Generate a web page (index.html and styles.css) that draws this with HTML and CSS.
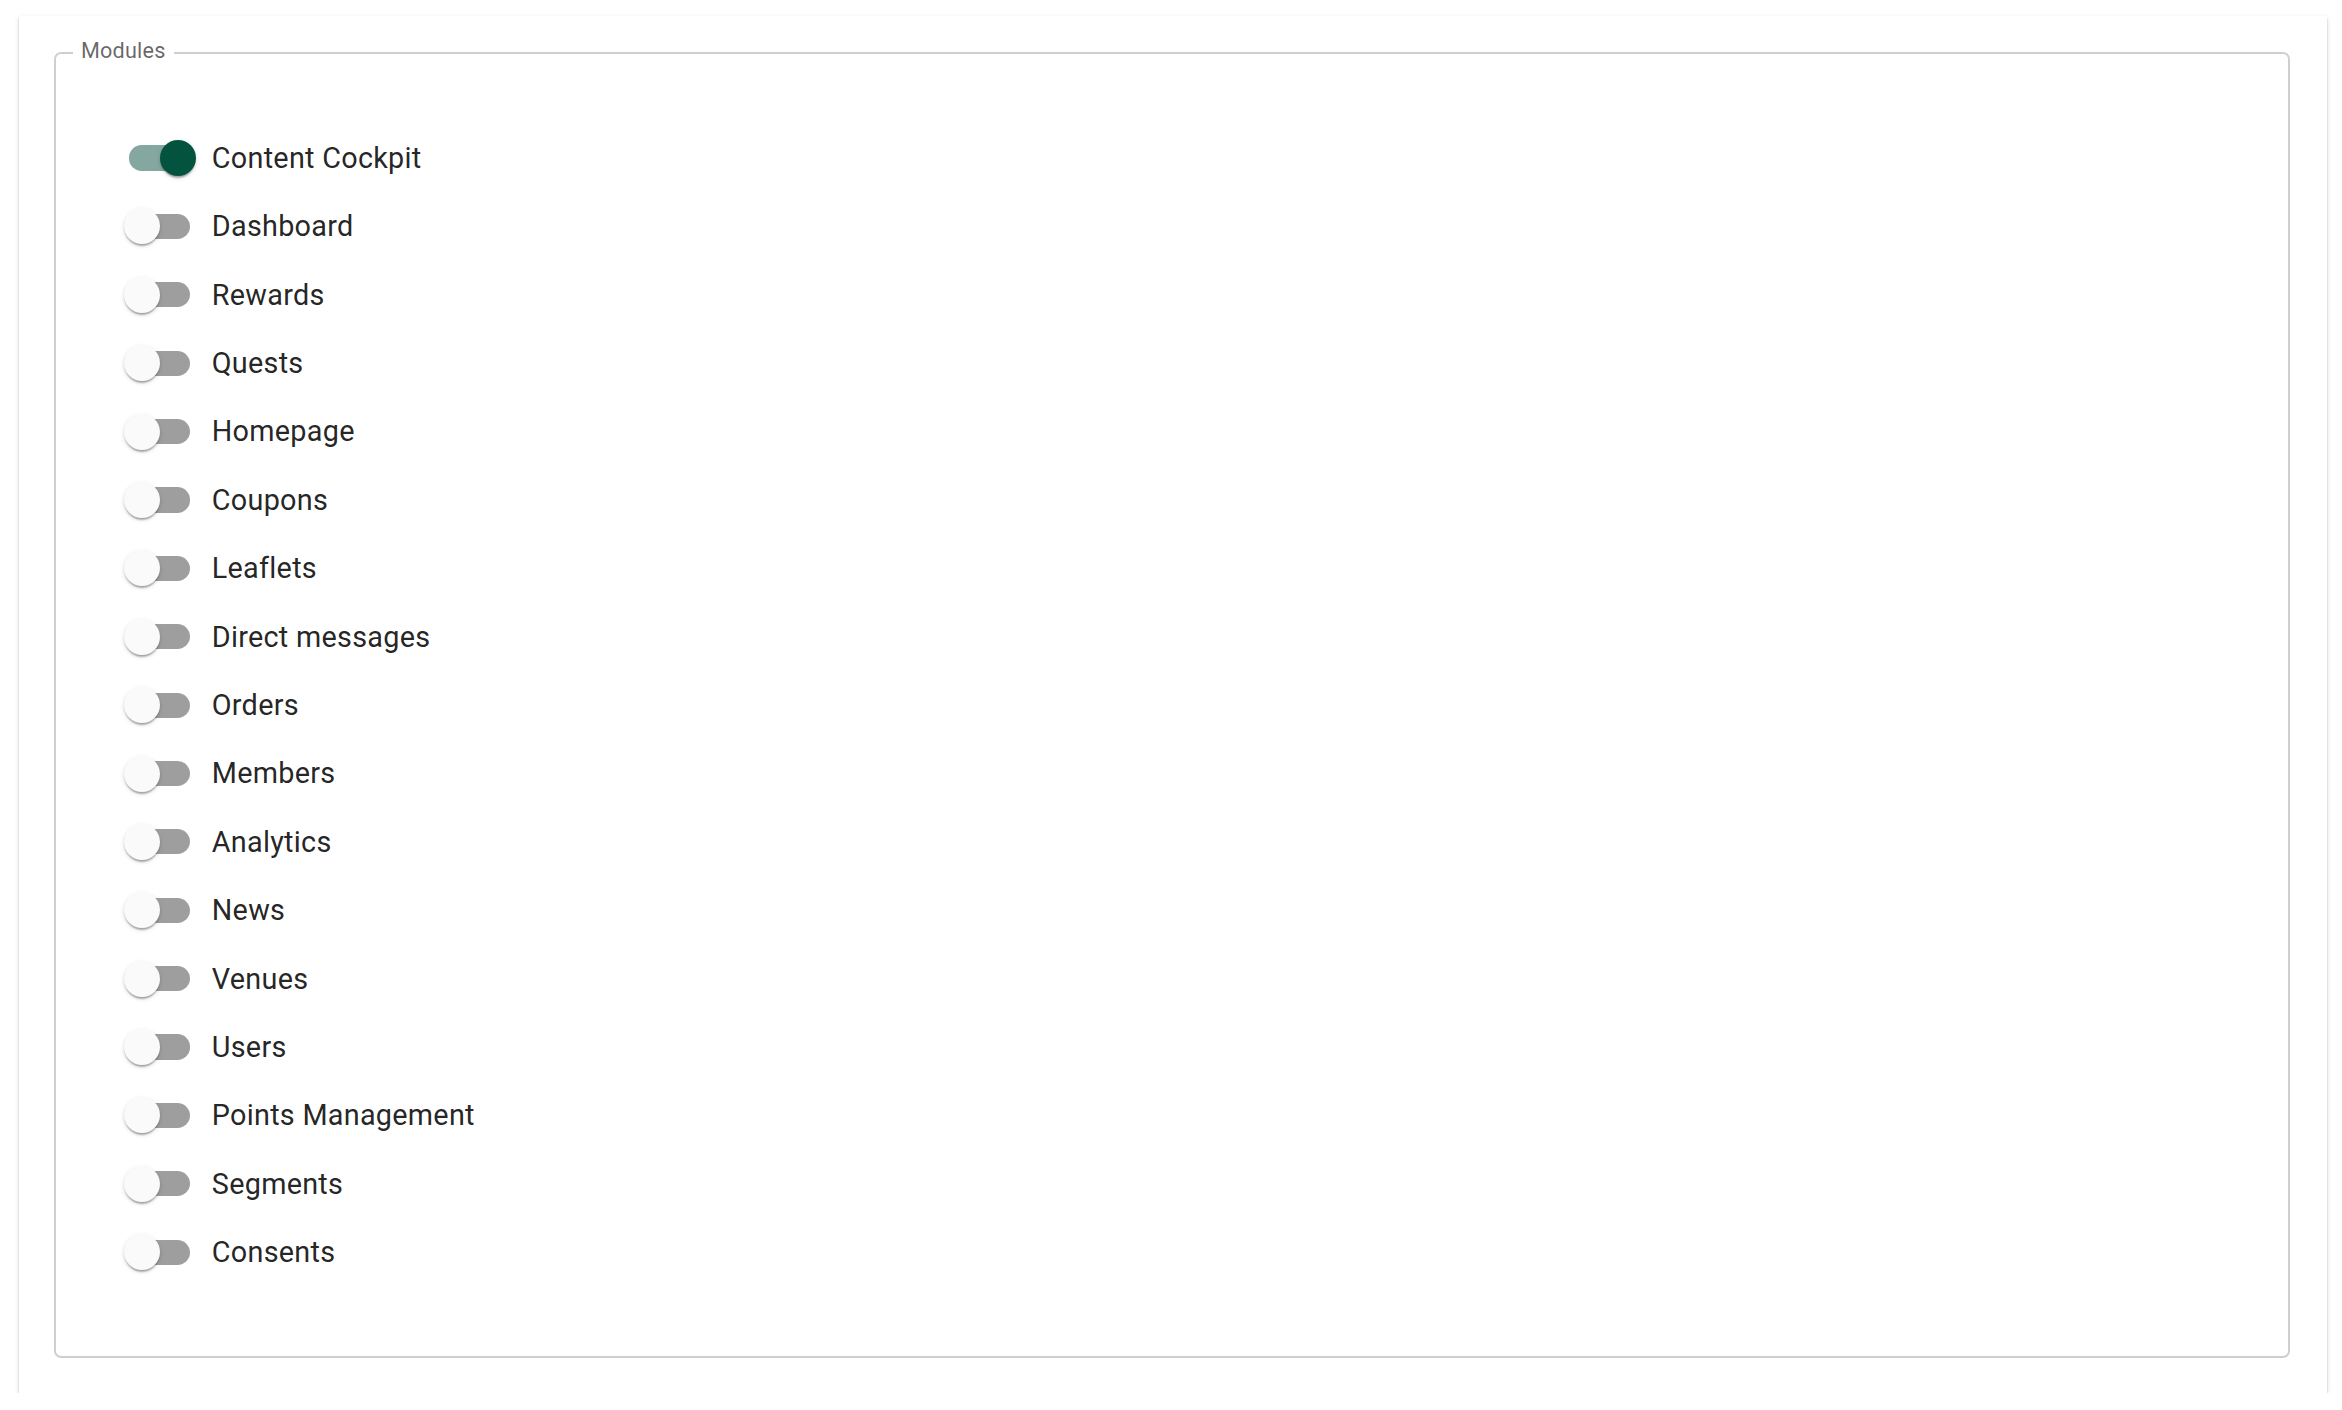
FILE: index.html
```html
<!DOCTYPE html>
<html>
<head>
<meta charset="utf-8">
<link rel="stylesheet" href="styles.css">
</head>
<body>
<div class="card">
  <fieldset class="group">
    <legend class="legend">Modules</legend>
    <div class="list">
      <label class="row"><span class="switch on"><span class="track"></span><span class="thumb"></span></span><span class="label">Content Cockpit</span></label>
      <label class="row"><span class="switch"><span class="track"></span><span class="thumb"></span></span><span class="label">Dashboard</span></label>
      <label class="row"><span class="switch"><span class="track"></span><span class="thumb"></span></span><span class="label">Rewards</span></label>
      <label class="row"><span class="switch"><span class="track"></span><span class="thumb"></span></span><span class="label">Quests</span></label>
      <label class="row"><span class="switch"><span class="track"></span><span class="thumb"></span></span><span class="label">Homepage</span></label>
      <label class="row"><span class="switch"><span class="track"></span><span class="thumb"></span></span><span class="label">Coupons</span></label>
      <label class="row"><span class="switch"><span class="track"></span><span class="thumb"></span></span><span class="label">Leaflets</span></label>
      <label class="row"><span class="switch"><span class="track"></span><span class="thumb"></span></span><span class="label">Direct messages</span></label>
      <label class="row"><span class="switch"><span class="track"></span><span class="thumb"></span></span><span class="label">Orders</span></label>
      <label class="row"><span class="switch"><span class="track"></span><span class="thumb"></span></span><span class="label">Members</span></label>
      <label class="row"><span class="switch"><span class="track"></span><span class="thumb"></span></span><span class="label">Analytics</span></label>
      <label class="row"><span class="switch"><span class="track"></span><span class="thumb"></span></span><span class="label">News</span></label>
      <label class="row"><span class="switch"><span class="track"></span><span class="thumb"></span></span><span class="label">Venues</span></label>
      <label class="row"><span class="switch"><span class="track"></span><span class="thumb"></span></span><span class="label">Users</span></label>
      <label class="row"><span class="switch"><span class="track"></span><span class="thumb"></span></span><span class="label">Points Management</span></label>
      <label class="row"><span class="switch"><span class="track"></span><span class="thumb"></span></span><span class="label">Segments</span></label>
      <label class="row"><span class="switch"><span class="track"></span><span class="thumb"></span></span><span class="label">Consents</span></label>
    </div>
  </fieldset>
</div>
</body>
</html>
```

FILE: styles.css
```css
html, body {
  margin: 0;
  padding: 0;
  background: #ffffff;
}
body {
  font-family: Roboto, "Liberation Sans", sans-serif;
  padding: 16px 15px 0 19px;
}
.card {
  width: 2308px;
  box-sizing: border-box;
  background: #ffffff;
  padding: 21.5px 37px 35px 35px;
  box-shadow: 0 3.6px 1.8px -1.8px rgba(0,0,0,0.3), 0 1.8px 1.8px 0 rgba(0,0,0,0.2), 0 1.8px 5.4px 0 rgba(0,0,0,0.12);
}
.group {
  margin: 0;
  padding: 0;
  border: 2px solid #cfcfcf;
  border-radius: 7px;
  min-width: 0;
}
.legend {
  margin-left: 17px;
  padding: 0 8px 5px 8px;
  font-size: 21.6px;
  line-height: 25px;
  letter-spacing: 0.00938em;
  color: rgba(0,0,0,0.6);
}
.list {
  display: flex;
  flex-direction: column;
  align-items: flex-start;
  padding: 56.3px 0 70px 51.4px;
}
.row {
  display: flex;
  align-items: center;
  height: 68.4px;
  cursor: pointer;
}
.switch {
  position: relative;
  display: block;
  width: 104.4px;
  height: 68.4px;
  flex: none;
}
.track {
  position: absolute;
  left: 21.6px;
  top: 21.6px;
  width: 61.2px;
  height: 25.2px;
  border-radius: 12.6px;
  background: #000;
  opacity: 0.38;
}
.thumb {
  position: absolute;
  left: 16.2px;
  top: 16.2px;
  width: 36px;
  height: 36px;
  border-radius: 50%;
  background: #fafafa;
  box-shadow: 0 3.6px 1.8px -1.8px rgba(0,0,0,0.2), 0 1.8px 1.8px 0 rgba(0,0,0,0.14), 0 1.8px 5.4px 0 rgba(0,0,0,0.12);
}
.switch.on .track {
  background: #0a5240;
  opacity: 0.5;
}
.switch.on .thumb {
  left: 52.2px;
  background: #04533f;
}
.label {
  font-size: 28.8px;
  line-height: 1.5;
  letter-spacing: 0.00938em;
  padding-top: 1px;
  color: rgba(0,0,0,0.87);
}
```
